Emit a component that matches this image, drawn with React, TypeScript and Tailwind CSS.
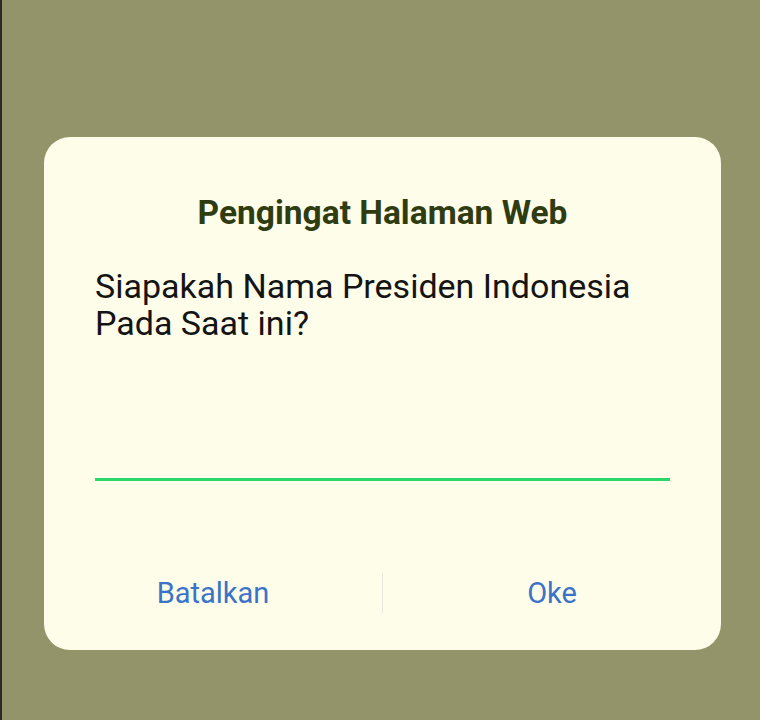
export default function App() {
  return (
    <div className="w-[760px] h-[720px] bg-[#94946b] border-l-2 border-[#2a2a22] pt-[137px] pl-[42px] font-['Roboto',sans-serif]">
      <div className="w-[677px] h-[513px] bg-[#fdfde9] rounded-[26px] flex flex-col">
        {/* Title */}
        <h1 className="mt-[57px] text-center text-[33.5px] font-bold text-[#2f3c12] leading-[38px]">
          Pengingat Halaman Web
        </h1>

        {/* Message */}
        <p className="mt-[36px] px-[51px] text-[34px] leading-[37px] text-[#141414]">
          Siapakah Nama Presiden Indonesia
          <br />
          Pada Saat ini?
        </p>

        {/* Input */}
        <div className="mx-[51px] mt-[136px] h-[3px] bg-[#2ad86a]" />

        {/* Actions */}
        <div className="mt-[92px] flex items-center">
          <button className="flex-1 text-center text-[29px] text-[#3b73c8] leading-[40px]">
            Batalkan
          </button>
          <div className="w-px h-[40px] bg-[#e8e8dc]" />
          <button className="flex-1 text-center text-[29px] text-[#3b73c8] leading-[40px]">
            Oke
          </button>
        </div>
      </div>
    </div>
  );
}
